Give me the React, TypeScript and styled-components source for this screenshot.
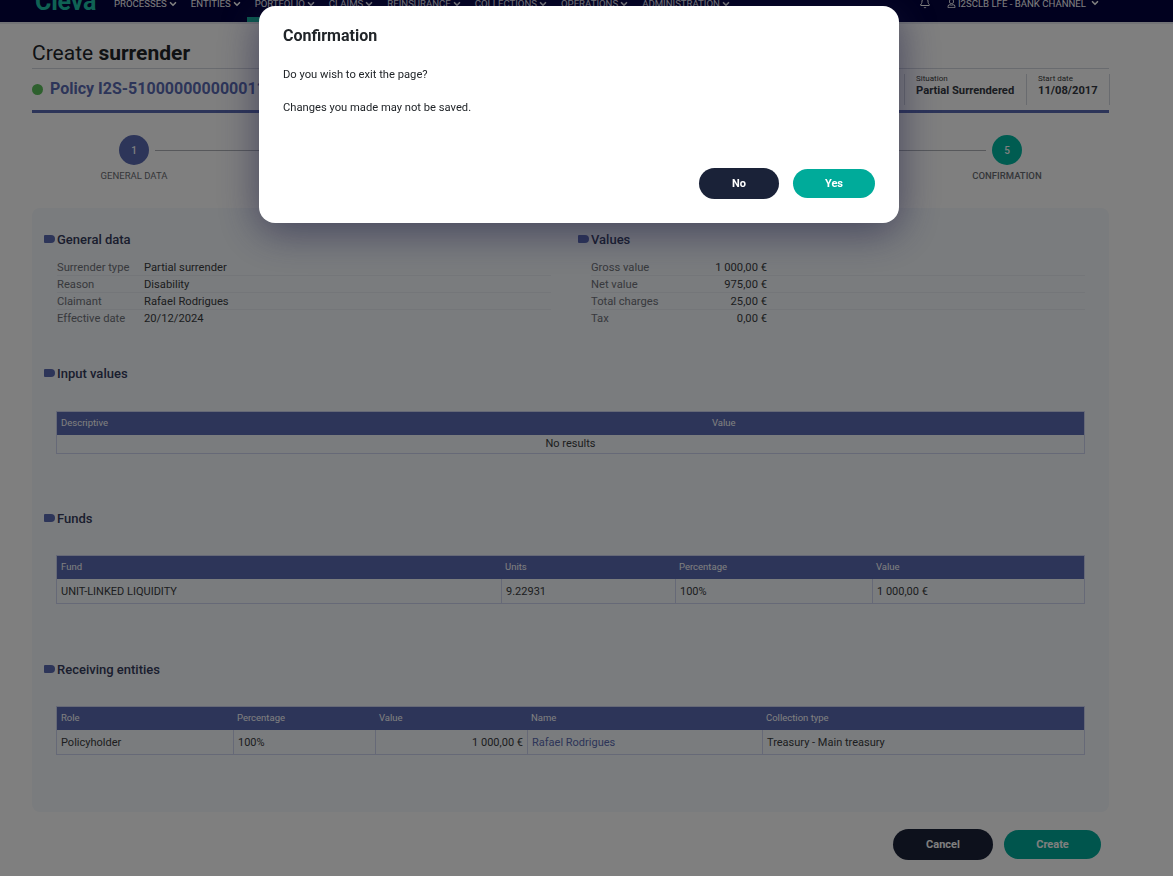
import React from 'react';
import styled, { createGlobalStyle } from 'styled-components';
import { Bell, ChevronDown } from 'lucide-react';
import { FaRegUser } from 'react-icons/fa';

const GlobalStyle = createGlobalStyle`
  html, body {
    margin: 0;
    height: 100%;
    overflow: hidden;
    background: #fff;
    font-family: Roboto, "Liberation Sans", sans-serif;
    color: #3a3c40;
  }
  * { box-sizing: border-box; }
`;

// the screenshot was taken with the page scrolled a little
const Page = styled.div`
  margin-top: -30px;
`;

const TopBar = styled.header`
  height: 54px;
  background: #02023e;
  border-bottom: 2px solid #e4e6ec;
  display: flex;
  align-items: flex-end;
  padding: 0 73px 0 35px;
`;

const Logo = styled.div`
  width: 79px;
  font-size: 25px;
  font-weight: 700;
  line-height: 30px;
  margin-bottom: 5px;
  letter-spacing: -0.2px;
  color: #1fc4a8;
`;

const Nav = styled.nav`
  display: flex;
  flex: 1;
  gap: 5px;
`;

const NavItem = styled.a<{ $active?: boolean }>`
  display: flex;
  align-items: center;
  gap: 1px;
  height: 22px;
  padding: 0 8px 10px 0;
  margin-left: ${(p) => (p.$active ? '-8px' : '0')};
  padding-left: ${(p) => (p.$active ? '8px' : '0')};
  border-bottom: 5px solid ${(p) => (p.$active ? '#14b49c' : 'transparent')};
  font-size: 9.6px;
  color: #fff;
  white-space: nowrap;
`;

const TopActions = styled.div`
  display: flex;
  align-items: center;
  height: 22px;
  padding-bottom: 16px;
  font-size: 9.6px;
  color: #fff;
  white-space: nowrap;
`;

const UserName = styled.span`
  display: flex;
  align-items: center;
  margin-left: 16px;
  gap: 2px;
`;

const Content = styled.main`
  padding: 0 64px 0 32px;
`;

const Title = styled.h1`
  margin: 0;
  height: 44px;
  padding-top: 16px;
  font-size: 21px;
  line-height: 26px;
  font-weight: 400;
  color: #212529;
  strong { font-weight: 700; }
`;

const PolicyBar = styled.div`
  display: flex;
  align-items: center;
  height: 45px;
  border-top: 1px solid #d3d6de;
  border-bottom: 3px solid #5a6ab2;
`;

const StatusDot = styled.span`
  width: 11px;
  height: 11px;
  border-radius: 50%;
  background: #5cc15c;
  margin-right: 7px;
`;

const PolicyName = styled.span`
  flex: 1;
  margin-bottom: 2px;
  font-size: 16px;
  font-weight: 700;
  white-space: nowrap;
  color: #5a6ab2;
`;

const Fact = styled.div<{ $width: number; $last?: boolean }>`
  width: ${(p) => p.$width}px;
  height: 31px;
  padding-left: 11px;
  border-left: 1px solid #d3d6de;
  border-right: ${(p) => (p.$last ? '1px solid #d3d6de' : 'none')};
  margin-right: ${(p) => (p.$last ? '-1px' : '0')};
`;

const FactLabel = styled.div`
  font-size: 8px;
  line-height: 10px;
  color: #3a3c40;
`;

const FactValue = styled.div`
  font-size: 11.2px;
  font-weight: 700;
  line-height: 16px;
  margin-top: -1px;
  color: #343842;
`;

const Stepper = styled.div`
  display: flex;
  align-items: flex-start;
  height: 95px;
  padding-top: 22px;
  margin: 0 55px;
`;

const Step = styled.div`
  width: 94px;
  display: flex;
  flex-direction: column;
  align-items: center;
  flex-shrink: 0;
`;

const StepCircle = styled.div<{ $done?: boolean }>`
  width: 30px;
  height: 30px;
  border-radius: 50%;
  display: flex;
  align-items: center;
  justify-content: center;
  font-size: 10px;
  font-weight: 500;
  color: #fff;
  background: ${(p) => (p.$done ? '#00b8a2' : '#5a6ab2')};
`;

const StepLabel = styled.div<{ $strong?: boolean }>`
  margin-top: 5px;
  font-size: 9.5px;
  line-height: 12px;
  font-weight: ${(p) => (p.$strong ? 500 : 400)};
  text-transform: uppercase;
  white-space: nowrap;
  color: #6b6e74;
`;

const StepLine = styled.div`
  flex: 1;
  height: 1px;
  margin: 15px -26px 0;
  background: #aeb1b6;
`;

const Card = styled.section`
  background: #f4f8fc;
  border-radius: 8px;
  padding: 23px 24px 57px 12px;
`;

const Columns = styled.div`
  display: grid;
  grid-template-columns: 534px 1fr;
  margin-bottom: 38px;
`;

const Heading = styled.h2<{ $gap?: number }>`
  display: flex;
  align-items: center;
  margin: 0 0 ${(p) => p.$gap ?? 29}px;
  height: 16px;
  font-size: 13px;
  font-weight: 500;
  color: #343c5c;
  &::before {
    content: '';
    width: 11px;
    height: 8px;
    margin: 0 2px 1px 0;
    background: #5a6ab2;
    border-radius: 1px 4px 4px 1px;
  }
`;

const InfoList = styled.div<{ $end?: number }>`
  margin: 0 ${(p) => p.$end ?? 0}px 0 13px;
`;

const InfoRow = styled.div`
  display: flex;
  height: 17px;
  line-height: 18px;
  font-size: 11.2px;
  border-bottom: 1px solid #e9edf2;
  &:last-child { border-bottom: none; }
`;

const InfoLabel = styled.span`
  width: 87px;
  color: #70737a;
`;

const InfoValue = styled.span`
  color: #3a3c40;
`;

const MoneyLabel = styled.span`
  width: 100px;
  color: #70737a;
`;

const MoneyValue = styled.span`
  width: 76px;
  text-align: right;
  color: #3a3c40;
`;

const Table = styled.div<{ $after?: number }>`
  margin: 0 0 ${(p) => p.$after ?? 56}px 12px;
  width: 1029px;
  font-size: 11px;
`;

const HeadRow = styled.div<{ $cols: string }>`
  display: grid;
  grid-template-columns: ${(p) => p.$cols};
  height: 24px;
  background: #5a6ab2;
  border: 1px solid #cdd2ee;
  border-bottom: none;
`;

const HeadCell = styled.div`
  padding: 0 4px;
  font-size: 9.5px;
  line-height: 22px;
  color: #fff;
`;

const BodyRow = styled.div<{ $cols: string; $height: number }>`
  display: grid;
  grid-template-columns: ${(p) => p.$cols};
  height: ${(p) => p.$height}px;
  border: 1px solid #cdd2ee;
  border-top: none;
`;

const Cell = styled.div<{ $right?: boolean; $link?: boolean }>`
  height: 24px;
  padding: 1px 4px 0;
  line-height: 24px;
  text-align: ${(p) => (p.$right ? 'right' : 'left')};
  color: ${(p) => (p.$link ? '#5a6ab2' : '#3a3c40')};
  & + & { border-left: 1px solid #cdd2ee; }
`;

const EmptyCell = styled.div`
  text-align: center;
  line-height: 18px;
  color: #3a3c40;
`;

const Footer = styled.div`
  display: flex;
  justify-content: flex-end;
  align-items: center;
  gap: 11px;
  padding: 17px 8px 0 0;
`;

const Button = styled.button<{ $tone: 'dark' | 'teal'; $width: number; $height: number }>`
  width: ${(p) => p.$width}px;
  height: ${(p) => p.$height}px;
  border: none;
  border-radius: 16px;
  font-family: inherit;
  font-size: 11px;
  font-weight: 700;
  color: #fff;
  background: ${(p) => (p.$tone === 'dark' ? '#1a2238' : '#00ab9a')};
`;

const Backdrop = styled.div`
  position: fixed;
  inset: 0;
  background: rgba(0, 0, 0, 0.5);
`;

const Modal = styled.div`
  position: fixed;
  top: 6px;
  left: 259px;
  width: 640px;
  height: 217px;
  display: flex;
  flex-direction: column;
  background: #fff;
  border-radius: 16px;
  padding: 20px 24px 24px;
  box-shadow: 0 8px 40px rgba(30, 30, 70, 0.6);
`;

const ModalTitle = styled.h3`
  margin: 0 0 22px;
  font-size: 16px;
  line-height: 20px;
  font-weight: 700;
  color: #212529;
`;

const ModalText = styled.p`
  margin: 0 0 20px;
  font-size: 11.2px;
  line-height: 13px;
  color: #212529;
`;

const ModalActions = styled.div`
  margin-top: auto;
  display: flex;
  justify-content: flex-end;
  align-items: center;
  gap: 14px;
`;

const navItems = ['Processes', 'Entities', 'Portfolio', 'Claims', 'Reinsurance', 'Collections', 'Operations', 'Administration'];

const generalData = [
  ['Surrender type', 'Partial surrender'],
  ['Reason', 'Disability'],
  ['Claimant', 'Rafael Rodrigues'],
  ['Effective date', '20/12/2024'],
];

const values = [
  ['Gross value', '1 000,00 €'],
  ['Net value', '975,00 €'],
  ['Total charges', '25,00 €'],
  ['Tax', '0,00 €'],
];

const inputCols = '651px 1fr';
const fundCols = '444px 174px 197px 1fr';
const entityCols = '176px 142px 152px 235px 1fr';

const App = () => {
  return (
    <>
      <GlobalStyle />
      <Page>
        <TopBar>
          <Logo>Cleva</Logo>
          <Nav>
            {navItems.map((item) => (
              <NavItem key={item} $active={item === 'Portfolio'}>
                {item.toUpperCase()}
                <ChevronDown size={10} strokeWidth={4} />
              </NavItem>
            ))}
          </Nav>
          <TopActions>
            <Bell size={12} />
            <UserName>
              <FaRegUser size={9} />
              I2SCLB LFE - BANK CHANNEL
              <ChevronDown size={10} strokeWidth={4} style={{ marginLeft: 2 }} />
            </UserName>
          </TopActions>
        </TopBar>
        <Content>
          <Title>
            Create <strong>surrender</strong>
          </Title>
          <PolicyBar>
            <StatusDot />
            <PolicyName>Policy I2S-510000000000011</PolicyName>
            <Fact $width={122}>
              <FactLabel>Situation</FactLabel>
              <FactValue>Partial Surrendered</FactValue>
            </Fact>
            <Fact $width={84} $last>
              <FactLabel>Start date</FactLabel>
              <FactValue>11/08/2017</FactValue>
            </Fact>
          </PolicyBar>
          <Stepper>
            <Step>
              <StepCircle>1</StepCircle>
              <StepLabel>General data</StepLabel>
            </Step>
            <StepLine />
            <Step>
              <StepCircle $done>5</StepCircle>
              <StepLabel $strong>Confirmation</StepLabel>
            </Step>
          </Stepper>
          <Card>
            <Columns>
              <div>
                <Heading $gap={12}>General data</Heading>
                <InfoList $end={27}>
                  {generalData.map(([label, value]) => (
                    <InfoRow key={label}>
                      <InfoLabel>{label}</InfoLabel>
                      <InfoValue>{value}</InfoValue>
                    </InfoRow>
                  ))}
                </InfoList>
              </div>
              <div>
                <Heading $gap={12}>Values</Heading>
                <InfoList>
                  {values.map(([label, value]) => (
                    <InfoRow key={label}>
                      <MoneyLabel>{label}</MoneyLabel>
                      <MoneyValue>{value}</MoneyValue>
                    </InfoRow>
                  ))}
                </InfoList>
              </div>
            </Columns>

            <Heading $gap={30}>Input values</Heading>
            <Table>
              <HeadRow $cols={inputCols}>
                <HeadCell>Descriptive</HeadCell>
                <HeadCell>Value</HeadCell>
              </HeadRow>
              <BodyRow $cols="1fr" $height={19}>
                <EmptyCell>No results</EmptyCell>
              </BodyRow>
            </Table>

            <Heading>Funds</Heading>
            <Table $after={57}>
              <HeadRow $cols={fundCols}>
                <HeadCell>Fund</HeadCell>
                <HeadCell>Units</HeadCell>
                <HeadCell>Percentage</HeadCell>
                <HeadCell>Value</HeadCell>
              </HeadRow>
              <BodyRow $cols={fundCols} $height={25}>
                <Cell>UNIT-LINKED LIQUIDITY</Cell>
                <Cell>9.22931</Cell>
                <Cell>100%</Cell>
                <Cell>1 000,00 €</Cell>
              </BodyRow>
            </Table>

            <Heading>Receiving entities</Heading>
            <Table $after={0}>
              <HeadRow $cols={entityCols}>
                <HeadCell>Role</HeadCell>
                <HeadCell>Percentage</HeadCell>
                <HeadCell>Value</HeadCell>
                <HeadCell>Name</HeadCell>
                <HeadCell>Collection type</HeadCell>
              </HeadRow>
              <BodyRow $cols={entityCols} $height={25}>
                <Cell>Policyholder</Cell>
                <Cell>100%</Cell>
                <Cell $right>1 000,00 €</Cell>
                <Cell $link>Rafael Rodrigues</Cell>
                <Cell>Treasury - Main treasury</Cell>
              </BodyRow>
            </Table>
          </Card>
          <Footer>
            <Button $tone="dark" $width={100} $height={31}>Cancel</Button>
            <Button $tone="teal" $width={97} $height={29}>Create</Button>
          </Footer>
        </Content>
      </Page>
      <Backdrop />
      <Modal>
        <ModalTitle>Confirmation</ModalTitle>
        <ModalText>Do you wish to exit the page?</ModalText>
        <ModalText>Changes you made may not be saved.</ModalText>
        <ModalActions>
          <Button $tone="dark" $width={80} $height={31}>No</Button>
          <Button $tone="teal" $width={82} $height={29}>Yes</Button>
        </ModalActions>
      </Modal>
    </>
  );
};

export default App;
